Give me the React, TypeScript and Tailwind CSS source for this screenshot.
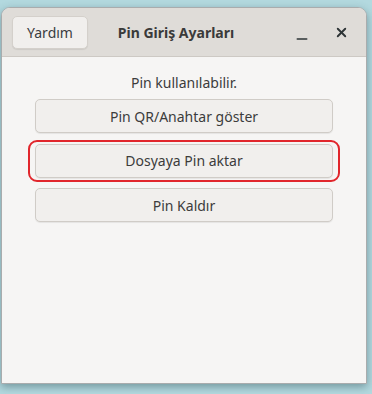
import { X, Minus } from 'lucide-react';

export default function App() {
  const actions = ['Pin QR/Anahtar göster', 'Dosyaya Pin aktar', 'Pin Kaldır'];

  return (
    <div
      className="w-[372px] h-[394px] bg-[#b3d9df] pt-[7px] pl-[1px] overflow-hidden"
      style={{ fontFamily: '"Noto Sans", "DejaVu Sans", sans-serif' }}
    >
      <div className="w-[366px] h-[377px] flex flex-col rounded-t-[9px] border border-[#a9acad] bg-[#f6f5f4] shadow-[0_3px_8px_rgba(40,70,80,0.45)] overflow-hidden">
        {/* Başlık çubuğu */}
        <div className="h-[49px] flex items-center bg-[#dfdcd8] border-b border-[#cdc9c4] px-[10px]">
          <button className="w-[76px] h-[33px] rounded-[5px] bg-[#f1efed] border border-[#d4d0cb] shadow-[0_1px_1px_rgba(0,0,0,0.08)] text-[14px] text-[#3a3c3f]">
            Yardım
          </button>
          <div className="flex-1 text-center text-[14px] font-bold text-[#3a3a3a] pr-[30px]">
            Pin Giriş Ayarları
          </div>
          <div className="flex items-center gap-[24px] pr-[7px]">
            <Minus className="w-[16px] h-[16px] mt-[14px] text-[#2e3436]" strokeWidth={2.5} />
            <X className="w-[15px] h-[15px] text-[#2e3436]" strokeWidth={3} />
          </div>
        </div>

        {/* İçerik */}
        <div className="flex flex-col items-center pt-[16px]">
          <p className="text-[14px] text-[#3c3c3c] leading-[20px]">Pin kullanılabilir.</p>
          <div className="flex flex-col gap-[10.5px] mt-[6px]">
            {actions.map((label, i) => (
              <div
                key={label}
                className={
                  i === 1
                    ? 'rounded-[9px] border-2 border-[#e1262c] px-[5px] py-[2px] -mx-[7px] -my-[4px]'
                    : ''
                }
              >
                <button className="w-[298px] h-[34px] rounded-[5px] bg-[#f1efed] border border-[#d0ccc7] shadow-[0_1px_1px_rgba(0,0,0,0.07)] text-[14px] text-[#3c3c3c]">
                  {label}
                </button>
              </div>
            ))}
          </div>
        </div>
      </div>
    </div>
  );
}
